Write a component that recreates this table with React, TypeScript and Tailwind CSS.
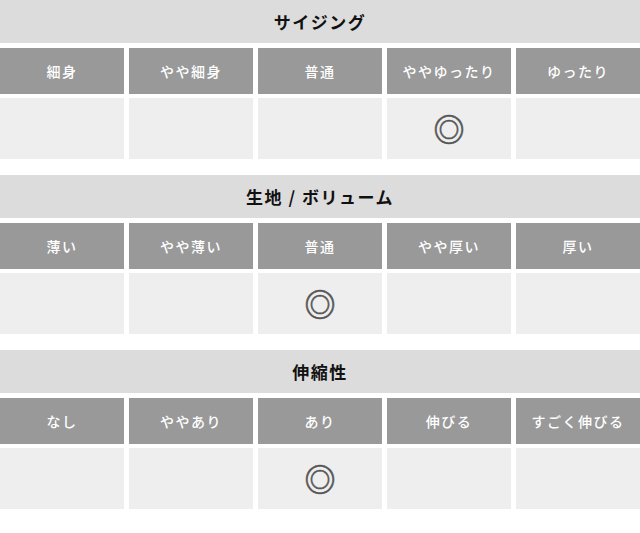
const sections = [
  {
    title: "サイジング",
    options: ["細身", "やや細身", "普通", "ややゆったり", "ゆったり"],
    selected: 3,
  },
  {
    title: "生地 / ボリューム",
    options: ["薄い", "やや薄い", "普通", "やや厚い", "厚い"],
    selected: 2,
  },
  {
    title: "伸縮性",
    options: ["なし", "ややあり", "あり", "伸びる", "すごく伸びる"],
    selected: 2,
  },
]

function App() {
  return (
    <div className="w-[640px] bg-white font-['Noto_Sans_CJK_JP',sans-serif]">
      {sections.map((s) => (
        <div key={s.title} className="mb-[16px]">
          <h2 className="h-[43px] bg-[#dcdcdc] flex items-center justify-center text-[17px] font-bold text-[#111] tracking-[1.5px]">
            {s.title}
          </h2>

          <div className="grid grid-cols-5 gap-[5px] mt-[5px]">
            {s.options.map((o) => (
              <div
                key={o}
                className="h-[46px] bg-[#999999] flex items-center justify-center text-white text-[14px] font-medium tracking-[1.5px]"
              >
                {o}
              </div>
            ))}
          </div>

          <div className="grid grid-cols-5 gap-[5px] mt-[4px]">
            {s.options.map((o, i) => (
              <div
                key={o}
                className="h-[61px] bg-[#eeeeee] flex items-center justify-center pb-[2px] text-[31px] font-bold leading-none text-[#555] [-webkit-text-stroke:0.5px_#555]"
              >
                {i === s.selected ? "◎" : ""}
              </div>
            ))}
          </div>
        </div>
      ))}
    </div>
  )
}

export default App
